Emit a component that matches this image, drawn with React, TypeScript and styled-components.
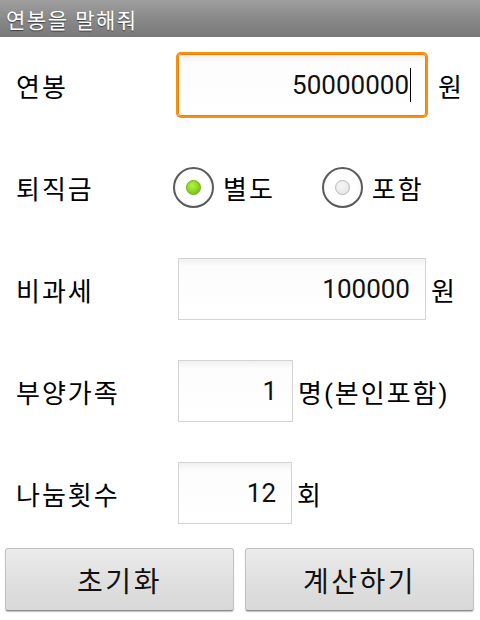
import * as React from "react";
import styled, { createGlobalStyle } from "styled-components";

const GlobalStyle = createGlobalStyle`
  html, body {
    margin: 0;
    padding: 0;
    background: #ffffff;
  }
  body {
    font-family: Roboto, "Noto Sans CJK KR", "Noto Sans", sans-serif;
  }
`;

interface IFieldProps {
  $width: number;
  $focused?: boolean;
}

const App = () => {
  return (
    <Screen>
      <GlobalStyle />
      <TitleBar>연봉을 말해줘</TitleBar>
      <Form>
        <Row>
          <Label>연봉</Label>
          <Field $width={248} $focused>
            50000000
            <Caret />
          </Field>
          <Unit $gap={12}>원</Unit>
        </Row>
        <Row>
          <Label>퇴직금</Label>
          <RadioGroup>
            <RadioOption>
              <RadioCircle>
                <RadioDot $checked />
              </RadioCircle>
              <RadioText>별도</RadioText>
            </RadioOption>
            <RadioOption>
              <RadioCircle>
                <RadioDot />
              </RadioCircle>
              <RadioText>포함</RadioText>
            </RadioOption>
          </RadioGroup>
        </Row>
        <Row>
          <Label>비과세</Label>
          <Field $width={248}>100000</Field>
          <Unit>원</Unit>
        </Row>
        <Row>
          <Label>부양가족</Label>
          <Field $width={115}>1</Field>
          <Unit>명(본인포함)</Unit>
        </Row>
        <Row>
          <Label>나눔횟수</Label>
          <Field $width={114}>12</Field>
          <Unit>회</Unit>
        </Row>
      </Form>
      <ButtonBar>
        <Button>초기화</Button>
        <Button>계산하기</Button>
      </ButtonBar>
    </Screen>
  );
};

const Screen = styled.div`
  width: 480px;
  height: 620px;
  display: flex;
  flex-direction: column;
  background: #ffffff;
  overflow: hidden;
`;

const TitleBar = styled.div`
  height: 37px;
  display: flex;
  align-items: center;
  padding-left: 6px;
  background: linear-gradient(#a09fa0, #8a898a 50%, #7a797a);
  color: #ffffff;
  font-size: 21px;
  letter-spacing: 1.5px;
  text-shadow: 0 1px 1px rgba(0, 0, 0, 0.5);
`;

const Form = styled.div`
  display: flex;
  flex-direction: column;
  gap: 38px;
  padding-top: 16px;
`;

const Row = styled.div`
  height: 64px;
  display: flex;
  align-items: center;
`;

const Label = styled.div`
  width: 162px;
  padding-left: 16px;
  font-size: 26px;
  letter-spacing: 2px;
  color: #000000;
`;

const Field = styled.div<IFieldProps>`
  box-sizing: border-box;
  width: ${(p) => p.$width}px;
  height: 62px;
  display: flex;
  align-items: center;
  justify-content: flex-end;
  padding-right: ${(p) => (p.$focused ? 14 : 15)}px;
  font-size: 26px;
  color: #111111;
  background: linear-gradient(#f1eff1, #fdfcfd 12%, #ffffff);
  border: 1px solid #d4d4d4;
  ${(p) =>
    p.$focused &&
    `
    border: 1px solid #f57d00;
    box-shadow: 0 0 0 2px #f7900f;
    border-radius: 3px;
  `}
`;

const Caret = styled.span`
  width: 1px;
  height: 34px;
  margin-left: 1px;
  background: #000000;
`;

const Unit = styled.div<{ $gap?: number }>`
  margin-left: ${(p) => p.$gap ?? 5}px;
  font-size: 26px;
  letter-spacing: 2px;
  color: #000000;
`;

const RadioGroup = styled.div`
  display: flex;
  align-items: center;
  gap: 47px;
  margin-left: -5px;
`;

const RadioOption = styled.div`
  display: flex;
  align-items: center;
  gap: 9px;
`;

const RadioCircle = styled.div`
  box-sizing: border-box;
  width: 41px;
  height: 41px;
  border-radius: 50%;
  border: 2px solid #5a5a5a;
  background: radial-gradient(#ffffff 55%, #ececec);
  display: flex;
  align-items: center;
  justify-content: center;
`;

const RadioDot = styled.div<{ $checked?: boolean }>`
  box-sizing: border-box;
  width: 15px;
  height: 15px;
  border-radius: 50%;
  border: 1px solid ${(p) => (p.$checked ? "#6aa812" : "#b8b8b8")};
  background: ${(p) =>
    p.$checked
      ? "radial-gradient(circle at 40% 35%, #b6f04a, #86d11c 60%, #6fb512)"
      : "radial-gradient(circle at 40% 35%, #f6f6f6, #e2e2e2)"};
`;

const RadioText = styled.div`
  font-size: 26px;
  letter-spacing: 2px;
  color: #000000;
`;

const ButtonBar = styled.div`
  display: grid;
  grid-template-columns: 1fr 1fr;
  gap: 11px;
  padding: 23px 6px 0 5px;
`;

const Button = styled.div`
  box-sizing: border-box;
  height: 63px;
  display: flex;
  align-items: center;
  justify-content: center;
  font-size: 28px;
  letter-spacing: 2.5px;
  color: #111111;
  border: 1px solid #c2c2c2;
  border-bottom-color: #8e8e8e;
  border-radius: 3px;
  background: linear-gradient(#ececec, #e0e0e0 50%, #d8d8d8);
  box-shadow: 0 1px 1px rgba(0, 0, 0, 0.25);
`;

export default App;
